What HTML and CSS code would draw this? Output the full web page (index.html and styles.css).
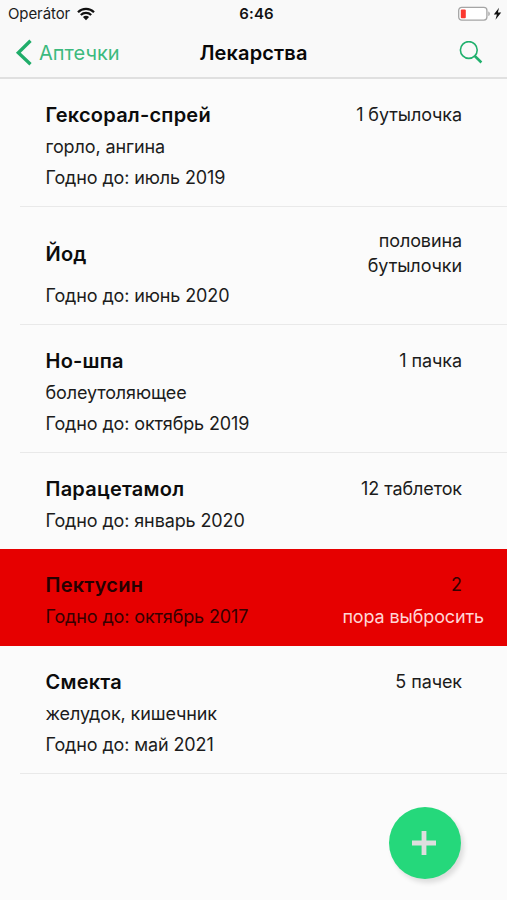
FILE: index.html
```html
<!DOCTYPE html>
<html lang="ru">
<head>
<meta charset="utf-8">
<title>Лекарства</title>
<link rel="stylesheet" href="styles.css">
</head>
<body>
<div class="app">
  <header class="header">
    <div class="status">
      <div class="carrier"><span class="operator">Operátor</span>
        <svg class="wifi" width="18" height="14" viewBox="0 0 18 14"><path d="M1 5.2C5.4.7 12.6.7 17 5.2M3.8 8c2.9-2.8 7.5-2.8 10.4 0" fill="none" stroke="#111" stroke-width="2.2"/><path d="M5.9 10.1c1.7-1.7 4.5-1.7 6.2 0L9 13.2z" fill="#111"/></svg>
      </div>
      <time class="clock">6:46</time>
      <div class="power">
        <svg width="44" height="16" viewBox="0 0 44 16"><rect x=".7" y="1.3" width="28.2" height="12.8" rx="3" fill="#fff" stroke="#a5a5a5" stroke-width="1.3"/><rect x="2.8" y="3.4" width="5" height="8.8" rx="1" fill="#fb3830"/><path d="M30.3 5.4c2 .7 2 4 0 4.7z" fill="#a5a5a5"/><path d="M41 1.8 35.8 8.4h3.1l-1.4 5.3 5.7-7.1h-3.3z" fill="#111"/></svg>
      </div>
    </div>
    <nav class="nav">
      <a class="back"><svg width="18" height="28" viewBox="0 0 18 28"><path d="M15.5 1.7 3.3 13.7l12.2 11.5" fill="none" stroke="#20ad6a" stroke-width="3.3"/></svg><span>Аптечки</span></a>
      <h1 class="title">Лекарства</h1>
      <a class="search" aria-label="Поиск"><svg width="24" height="24" viewBox="0 0 24 24" fill="none" stroke="#20b06d"><circle cx="9.8" cy="9" r="8.4" stroke-width="1.6"/><path d="m15.8 15 6.6 6.5" stroke-width="2.5"/></svg></a>
    </nav>
  </header>
  <main class="list">
    <article class="row">
      <div class="main"><h2 class="name">Гексорал-спрей</h2><span class="amount">1 бутылочка</span></div>
      <p class="note">горло, ангина</p>
      <p class="date">Годно до: июль 2019</p>
    </article>
    <article class="row row-tall">
      <div class="main"><h2 class="name">Йод</h2><span class="amount">половина<br>бутылочки</span></div>
      <p class="note">Годно до: июнь 2020</p>
    </article>
    <article class="row">
      <div class="main"><h2 class="name">Но-шпа</h2><span class="amount">1 пачка</span></div>
      <p class="note">болеутоляющее</p>
      <p class="date">Годно до: октябрь 2019</p>
    </article>
    <article class="row row-last">
      <div class="main"><h2 class="name">Парацетамол</h2><span class="amount">12 таблеток</span></div>
      <p class="note">Годно до: январь 2020</p>
    </article>
    <article class="row row-expired">
      <div class="main"><h2 class="name">Пектусин</h2><span class="amount">2</span></div>
      <div class="note expiry"><span>Годно до: октябрь 2017</span><span class="warning">пора выбросить</span></div>
    </article>
    <article class="row">
      <div class="main"><h2 class="name">Смекта</h2><span class="amount">5 пачек</span></div>
      <p class="note">желудок, кишечник</p>
      <p class="date">Годно до: май 2021</p>
    </article>
  </main>
  <button class="add" aria-label="Добавить"><svg width="24" height="24" viewBox="0 0 24 24"><path d="M12 0v24M0 12h24" stroke="#dedede" stroke-width="4.8"/></svg></button>
</div>
</body>
</html>
```
FILE: styles.css
```css
* { box-sizing: border-box; }
body { margin: 0; background: #fbfbfb; color: #1c1c1c; font-family: Inter, "Liberation Sans", sans-serif; }
h1, h2, p { margin: 0; }
svg { display: block; }
.app { position: relative; height: 900px; overflow: hidden; }
.header { height: 79px; background: #f9f9f9; border-bottom: 2px solid #e0e0e0; }
.status { display: grid; grid-template-columns: 1fr auto 1fr; align-items: center; height: 27px; padding: 0 5px 0 8px; }
.carrier { display: flex; align-items: center; gap: 7px; font-size: 15px; }
.operator { letter-spacing: -.1px; }
.clock { padding-left: 3px; color: #111; font-size: 15px; font-weight: 600; letter-spacing: .1px; }
.power { justify-self: end; }
.nav { display: grid; grid-template-columns: 1fr auto 1fr; align-items: center; height: 51px; padding: 0 24px 0 15px; }
.back { display: flex; align-items: center; gap: 6px; color: #3cba7e; font-size: 20px; }
.title { padding-left: 9px; color: #080808; font-size: 20px; font-weight: 600; letter-spacing: .15px; }
.search { justify-self: end; }
.row { position: relative; padding: 24px 45px 17px 45.5px; }
.row::after { content: ""; position: absolute; left: 20px; right: 0; bottom: 0; height: 1px; background: #e9e9e9; }
.row-tall { padding-top: 22px; }
.row-last { padding-bottom: 16px; }
.row-last::after, .row-expired::after { display: none; }
.main { display: flex; justify-content: space-between; align-items: center; }
.name { color: #0c0c0c; font-size: 20px; font-weight: 600; line-height: 24px; letter-spacing: .22px; }
.amount { font-size: 18px; line-height: 24px; letter-spacing: -.1px; text-align: right; }
.row-tall .amount { line-height: 24.5px; }
.note, .date { font-size: 18px; line-height: 24px; letter-spacing: -.12px; }
.note { margin-top: 8px; }
.row-tall .note { margin-top: 6px; }
.date { margin-top: 7px; }
.row-expired { background: #e60000; color: #350000; }
.row-expired .name { color: #250000; }
.expiry { display: flex; justify-content: space-between; margin-right: -22px; }
.warning { color: #ffd5d5; }
.add { position: absolute; left: 389px; top: 807px; width: 72px; height: 72px; display: grid; place-items: center; padding: 0 3px 0 0; border: 0; border-radius: 50%; background: #25d87b; box-shadow: 3px 4px 5px rgba(0, 0, 0, .12); }
```
